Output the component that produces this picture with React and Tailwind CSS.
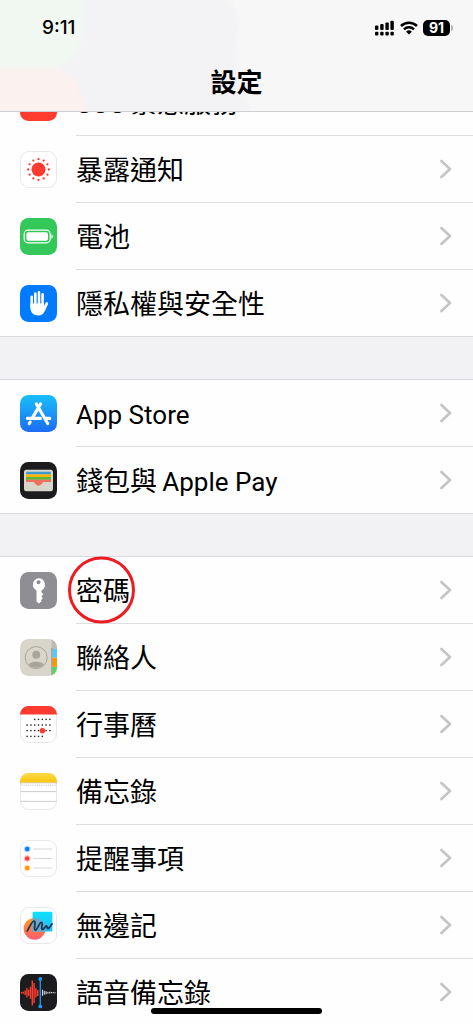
import React from "react";

const Svg = ({ children, className = "" }) => (
  <svg viewBox="0 0 37 37" className={`h-[37px] w-[37px] shrink-0 ${className}`} aria-hidden="true">
    {children}
  </svg>
);

const Tile = ({ fill, outlined }) => (
  <rect
    x={outlined ? 0.5 : 0}
    y={outlined ? 0.5 : 0}
    width={outlined ? 36 : 37}
    height={outlined ? 36 : 37}
    rx="8.5"
    fill={fill}
    stroke={outlined ? "#e8e8ea" : "none"}
  />
);

const SosIcon = () => (
  <Svg>
    <Tile fill="#ff3b30" />
  </Svg>
);

const ExposureIcon = () => (
  <Svg>
    <Tile fill="#fff" outlined />
    <circle cx="18.5" cy="18.5" r="7" fill="#ff3b30" />
    {Array.from({ length: 12 }, (_, i) => {
      const a = (i * Math.PI) / 6;
      return <circle key={i} cx={18.5 + 10.3 * Math.cos(a)} cy={18.5 + 10.3 * Math.sin(a)} r="1.15" fill="#ff3b30" />;
    })}
  </Svg>
);

const BatteryIcon = () => (
  <Svg>
    <Tile fill="#34c759" />
    <rect x="4.2" y="12.2" width="26" height="12.6" rx="3.8" fill="none" stroke="#fff" strokeWidth="1.2" />
    <rect x="6.4" y="14.3" width="21.6" height="8.4" rx="2" fill="#fff" />
    <path d="M31.4 16.3c1.9.6 1.9 3.8 0 4.4z" fill="#fff" />
  </Svg>
);

const HandIcon = () => (
  <Svg>
    <Tile fill="#007aff" />
    <g stroke="#fff" strokeWidth="2.6" strokeLinecap="round" fill="none">
      <path d="M11.7 11.8V22M15.3 8.6V20M19 7.4V20M22.6 9.2V20" />
      <path d="M26.8 18.4L24 24" />
    </g>
    <path d="M10.4 18.5h13.5v3.8l2-3.7 1.9.8-3.2 7.1c-1.2 2.7-3.4 4.1-6.4 4.1-4.9 0-7.8-3.2-7.8-8z" fill="#fff" />
  </Svg>
);

const AppStoreIcon = () => (
  <Svg>
    <defs>
      <linearGradient id="store" x1="0" y1="0" x2="0" y2="1">
        <stop stopColor="#19bffb" />
        <stop offset="1" stopColor="#1c6cf2" />
      </linearGradient>
    </defs>
    <Tile fill="url(#store)" />
    <g stroke="#fff" strokeWidth="3.1" strokeLinecap="round" fill="none">
      <path d="M20.6 8.9L12.1 23.4M16.4 8.9L27.7 28.6M10.2 27l-.9 1.6M7.4 23.4h13M26 23.4h3.8" />
    </g>
  </Svg>
);

const WalletIcon = () => (
  <Svg>
    <Tile fill="#1c1c1e" />
    <rect x="4" y="7.8" width="29" height="21.4" rx="2.2" fill="#d8d5ca" />
    <path d="M6 12.4v-1.2c0-.9.6-1.5 1.5-1.5h22c.9 0 1.5.6 1.5 1.5v1.2z" fill="#3d9bd0" />
    <rect x="6" y="12.4" width="25" height="2.6" fill="#f9b500" />
    <rect x="6" y="15" width="25" height="2.8" fill="#5fb53b" />
    <path d="M6 17.7h25v2.2h-7.2c-1.1 0-1.5 1.1-2.3 2.2-1.6 2.1-4.4 2.1-6 0-.8-1.1-1.2-2.2-2.3-2.2H6z" fill="#f0705f" />
  </Svg>
);

const KeyIcon = () => (
  <Svg>
    <Tile fill="#8e8e93" />
    <path
      fillRule="evenodd"
      fill="#fff"
      d="M18.5 6.3a6.4 6.4 0 0 1 2.9 12.1v1.8l2 2-2.1 2.2 1.6 1.8-2.1 2 .9 1-2.8 2.4-2.4-2.2v-11A6.4 6.4 0 0 1 18.5 6.3zm0 1.9a2 2 0 1 0 0 4 2 2 0 0 0 0-4z"
    />
  </Svg>
);

const ContactsIcon = () => (
  <Svg>
    <defs>
      <clipPath id="contactsTile"><rect width="37" height="37" rx="8.5" /></clipPath>
      <clipPath id="contactsFace"><circle cx="16.2" cy="18.6" r="10.4" /></clipPath>
    </defs>
    <g clipPath="url(#contactsTile)">
      <rect width="37" height="37" fill="#d8d6cb" />
      <rect x="31.6" width="6" height="10" fill="#bdbab0" />
      <rect x="32.2" y="10" width="5" height="8.6" fill="#5ac8fa" />
      <rect x="32.2" y="18.8" width="5" height="9" fill="#ff9500" />
      <rect x="32.2" y="28" width="5" height="9" fill="#4cd964" />
      <rect x="31.4" y="9" width="0.9" height="28" fill="#8f8d86" />
    </g>
    <circle cx="16.2" cy="18.6" r="11" fill="none" stroke="#aaa59c" strokeWidth="1" />
    <g clipPath="url(#contactsFace)" fill="#aaa59c">
      <circle cx="16.2" cy="15.8" r="4" />
      <ellipse cx="16.2" cy="27.8" rx="8.6" ry="5.4" />
    </g>
  </Svg>
);

const CalendarIcon = () => {
  const rows = [
    [13.4, 3, 7],
    [19, 1, 7],
    [24.6, 1, 7],
    [30.4, 1, 5],
  ];
  return (
    <Svg>
      <Tile fill="#fff" outlined />
      <path d="M0 8.4A8.5 8.5 0 0 1 8.5 0h20A8.5 8.5 0 0 1 37 8.4z" fill="#ff3b30" />
      {rows.map(([y, from, to]) =>
        Array.from({ length: to - from + 1 }, (_, i) => (
          <rect key={`${y}-${i}`} x={6.4 + (from + i - 1) * 3.8} y={y - 0.7} width="1.4" height="1.4" fill="#222" />
        ))
      )}
      <circle cx="22.4" cy="24.7" r="2.7" fill="#ff3b30" />
    </Svg>
  );
};

const NotesIcon = () => (
  <Svg>
    <defs>
      <linearGradient id="notes" x1="0" y1="0" x2="0" y2="1">
        <stop stopColor="#fdd94c" />
        <stop offset="1" stopColor="#fbc70b" />
      </linearGradient>
    </defs>
    <Tile fill="#fff" outlined />
    <path d="M0 9.4V8.5A8.5 8.5 0 0 1 8.5 0h20A8.5 8.5 0 0 1 37 8.5v.9z" fill="url(#notes)" />
    <path d="M0 9.8h37" stroke="#c9b77a" strokeWidth="0.8" />
    <path d="M1.5 12.2h35" stroke="#b9b9b9" strokeWidth="1" strokeDasharray="1 1.2" />
    <path d="M.5 18.6h36M.5 28.4h36" stroke="#c7c7cb" strokeWidth="0.9" />
  </Svg>
);

const RemindersIcon = () => (
  <Svg>
    <Tile fill="#fff" outlined />
    {[["#007aff", 9], ["#ff3b30", 18.5], ["#ff9500", 28]].map(([color, y]) => (
      <g key={color}>
        <circle cx="7.2" cy={y} r="3" fill="none" stroke={color} strokeOpacity="0.35" strokeWidth="0.9" />
        <circle cx="7.2" cy={y} r="2.3" fill={color} />
        <path d={`M13.4 ${y}h19`} stroke="#d1d1d6" strokeWidth="0.9" />
      </g>
    ))}
  </Svg>
);

const FreeformIcon = () => (
  <Svg>
    <defs>
      <linearGradient id="ball" x1="0" y1="0" x2="0" y2="1">
        <stop stopColor="#ff9b20" />
        <stop offset="1" stopColor="#ff5b70" />
      </linearGradient>
      <linearGradient id="card" x1="0" y1="0" x2="0" y2="1">
        <stop stopColor="#0fe0fb" />
        <stop offset="1" stopColor="#20bdfa" />
      </linearGradient>
      <clipPath id="ballClip"><circle cx="14.6" cy="21.8" r="10.9" /></clipPath>
    </defs>
    <Tile fill="#fff" outlined />
    <circle cx="14.6" cy="21.8" r="10.9" fill="url(#ball)" />
    <rect x="12.6" y="4.8" width="19.8" height="19.8" rx="1.2" fill="url(#card)" />
    <rect x="12.6" y="4.8" width="19.8" height="19.8" fill="#6fa9c9" clipPath="url(#ballClip)" />
    <path
      d="M7.2 24c2.7-4.3 4.6-9.8 6.8-9.8 2.6 0-.9 8.7 1.4 8.9 2 .2 4-8.1 6.2-7.6 1.9.4-1.3 6.5.9 6.8 1.9.2 2.3-3.4 3.9-3.3 1.4.1.2 2.6 1.6 2.5 1.6-.1 2.4-2.6 4-4.5"
      fill="none"
      stroke="#123a5e"
      strokeWidth="1.8"
      strokeLinecap="round"
      strokeLinejoin="round"
    />
  </Svg>
);

const VoiceIcon = () => (
  <Svg>
    <Tile fill="#1c1c1e" />
    <g stroke="#ff3b30" strokeWidth="1.4">
      <path d="M1.5 18v1.4M3.3 17.7v2M5.1 16.5v4.4M6.9 14v9.4M8.7 15.7v6M10.5 12.8v12M12.3 6.5v25M14.1 9v20M15.9 14.2v9.4M17.7 16v6" />
    </g>
    <g stroke="#d8d8da" strokeWidth="1.1">
      <path d="M22.5 15.8v6M24.3 16.8v4M26.1 17.2v3M27.9 18v1.4M29.7 17.8v1.8M31.5 18v1.2M33.3 18v1.2M35.1 18.2v1" />
    </g>
    <path d="M20.3 5v27" stroke="#1a9cf7" strokeWidth="1.3" />
    <circle cx="20.3" cy="5" r="1.9" fill="#1a9cf7" />
    <circle cx="20.3" cy="32.4" r="1.9" fill="#1a9cf7" />
  </Svg>
);

const Latin = ({ children }) => <span className="text-[26px]">{children}</span>;

const groups = [
  [
    { id: "sos", label: <><Latin>SOS{"\u2009"}</Latin>緊急服務</>, Icon: SosIcon },
    { id: "exposure", label: "暴露通知", Icon: ExposureIcon },
    { id: "battery", label: "電池", Icon: BatteryIcon },
    { id: "privacy", label: "隱私權與安全性", Icon: HandIcon },
  ],
  [
    { id: "store", label: <Latin>App Store</Latin>, Icon: AppStoreIcon },
    { id: "wallet", label: <>錢包與<Latin>{"\u2009"}Apple Pay</Latin></>, Icon: WalletIcon },
  ],
  [
    { id: "passwords", label: "密碼", Icon: KeyIcon, circled: true },
    { id: "contacts", label: "聯絡人", Icon: ContactsIcon },
    { id: "calendar", label: "行事曆", Icon: CalendarIcon },
    { id: "notes", label: "備忘錄", Icon: NotesIcon },
    { id: "reminders", label: "提醒事項", Icon: RemindersIcon },
    { id: "freeform", label: "無邊記", Icon: FreeformIcon },
    { id: "voice", label: "語音備忘錄", Icon: VoiceIcon },
  ],
];

const Row = ({ label, Icon, circled, last }) => (
  <li>
    <a
      href="#"
      className={
        last
          ? "flex h-[67px] items-stretch gap-[19px] border-b border-[#d9d9dc] pl-5"
          : "flex h-[67px] items-stretch gap-[19px] pl-5"
      }
    >
      <span className="flex items-center">
        <Icon />
      </span>
      <span
        className={
          last
            ? "flex flex-1 items-center justify-between pr-5"
            : "flex flex-1 items-center justify-between border-b border-[#dededf] pr-5"
        }
      >
        <span className="relative whitespace-nowrap pt-1 text-[27px] leading-8 text-black">
          {label}
          {circled && (
            <span className="absolute -left-2 top-1/2 h-[67px] w-[67px] -translate-y-1/2 rounded-full border-[3px] border-[#ec1c24]" />
          )}
        </span>
        <svg viewBox="0 0 14 20" className="h-5 w-3.5" fill="none" aria-hidden="true">
          <path d="M2.4 2l8.6 8-8.6 8" stroke="#c4c4c6" strokeWidth="2.6" strokeLinecap="round" strokeLinejoin="round" />
        </svg>
      </span>
    </a>
  </li>
);

const StatusIcons = () => (
  <div className="flex items-center gap-[5px]">
    <svg viewBox="0 0 20 16" className="h-4 w-5" aria-hidden="true">
      <g fill="#000">
        <rect x="0" y="5.4" width="3.4" height="4.6" rx="1" />
        <rect x="5.2" y="4" width="3.4" height="6" rx="1" />
        <rect x="10.4" y="2.5" width="3.4" height="7.5" rx="1" />
        <rect x="15.4" y="0.8" width="3.4" height="9.2" rx="1" />
        {[0, 5.2, 10.4, 15.4].map((x) => (
          <rect key={x} x={x} y="11.8" width="3.4" height="3.6" rx="1" />
        ))}
      </g>
    </svg>
    <svg viewBox="0 0 18 14" className="h-3.5 w-[18px]" fill="none" aria-hidden="true">
      <path d="M1 5a11.4 11.4 0 0 1 16 0" stroke="#000" strokeWidth="2.5" />
      <path d="M4 8.3a7.1 7.1 0 0 1 10 0" stroke="#000" strokeWidth="2.4" />
      <path d="M9 13.6L6.1 10.8a4.1 4.1 0 0 1 5.8 0z" fill="#000" />
    </svg>
    <div className="flex items-center gap-px">
      <div className="flex h-4 w-[27px] items-center justify-center rounded-[5px] bg-black text-[14px] font-bold leading-4 text-white">
        91
      </div>
      <div className="h-1.5 w-0.5 rounded-r-full bg-[#b5b5b7]" />
    </div>
  </div>
);

export default function App() {
  return (
    <div className="flex h-screen flex-col overflow-hidden bg-[#f2f2f4] font-['Inter','Noto_Sans_CJK_TC',sans-serif]">
      <header className="relative flex h-28 shrink-0 flex-col overflow-hidden border-b border-[#cfcfd1] bg-[#f7f7f7]">
        <svg className="absolute inset-0 h-full w-full" aria-hidden="true">
          <defs>
            <filter id="soft"><feGaussianBlur stdDeviation="2" /></filter>
          </defs>
          <g filter="url(#soft)">
            <path d="M-5-5H225Q242 10 236 45V90Q248 95 252 120H-5z" fill="#f3f3f5" />
            <path d="M-5-5H82V30Q80 68 45 68H-5z" fill="#f1f8f2" />
            <path d="M-5 68H50C75 70 84 90 87 120H-5z" fill="#fbf1ef" />
          </g>
        </svg>
        <div className="relative flex h-14 items-center justify-between pl-[42px] pr-5">
          <time className="text-[19px] font-medium leading-6">9:11</time>
          <StatusIcons />
        </div>
        <h1 className="relative flex h-[54px] items-center justify-center text-[26px] font-bold leading-8">設定</h1>
      </header>
      <main className="min-h-0 flex-1 overflow-y-auto font-['Roboto','Noto_Sans_CJK_TC',sans-serif] [scrollbar-width:none]">
        <div className="-mt-11 flex flex-col gap-[42px]">
          {groups.map((rows, g) => (
            <ul key={g} className="border-t border-[#d9d9dc] bg-[#fefefe]">
              {rows.map((row, i) => (
                <Row key={row.id} {...row} last={i === rows.length - 1} />
              ))}
            </ul>
          ))}
        </div>
      </main>
      <div className="fixed inset-x-0 bottom-[10px] z-20 mx-auto h-1.5 w-[36%] rounded-full bg-black" />
    </div>
  );
}
